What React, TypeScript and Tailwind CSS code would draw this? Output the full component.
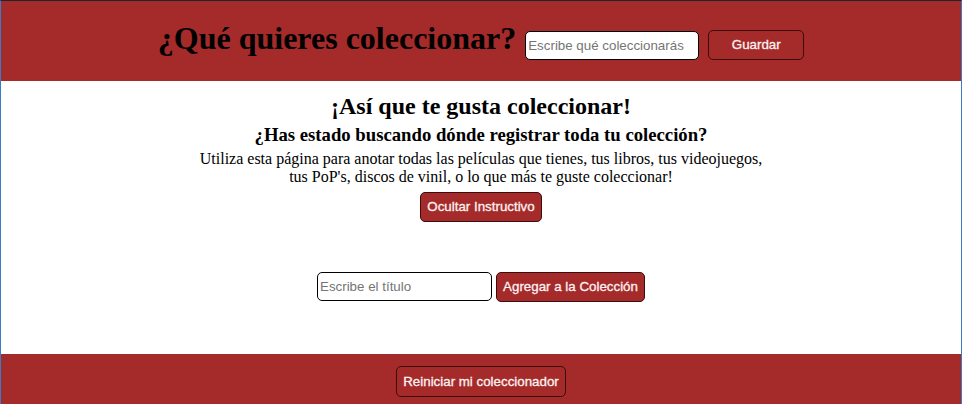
export default function App() {
  return (
    <div className="min-h-[404px] border-x border-t border-x-[#3b7dc4] border-t-[#1b2530] bg-white font-['Liberation_Serif',serif]">
      {/* header with title and collection name */}
      <header className="flex h-[80px] items-center justify-center gap-[9px] bg-[#a52a2a]">
        <h1 className="pb-[6px] text-[32px] leading-[37px] font-bold text-black">¿Qué quieres coleccionar?</h1>
        <input
          type="text"
          placeholder="Escribe qué coleccionarás"
          className="mt-[8px] h-[29px] w-[174px] rounded-[5px] border border-black bg-white px-[2px] font-['Liberation_Sans',sans-serif] text-[13.33px] text-black placeholder:text-[#757575]"
        />
        <button className="mt-[8px] h-[30px] w-[96px] rounded-[5px] border border-[#3d0c0c] bg-[#a52a2a] font-['Liberation_Sans',sans-serif] text-[13.33px] text-[#fdf2f2] [-webkit-text-stroke:0.3px_#fdf2f2]">
          Guardar
        </button>
      </header>

      {/* instructions */}
      <main className="flex h-[273px] flex-col items-center pt-[11px] text-center text-black">
        <h2 className="text-[24px] leading-[28px] font-bold">¡Así que te gusta coleccionar!</h2>
        <h3 className="mt-[4px] text-[18.72px] leading-[22px] font-bold">¿Has estado buscando dónde registrar toda tu colección?</h3>
        <p className="mt-[4px] text-[16px] leading-[18px]">
          Utiliza esta página para anotar todas las películas que tienes, tus libros, tus videojuegos,
          <br />
          tus PoP's, discos de vinil, o lo que más te guste coleccionar!
        </p>
        <button className="mt-[6px] h-[30px] w-[122px] rounded-[5px] border border-[#3d0c0c] bg-[#a52a2a] font-['Liberation_Sans',sans-serif] text-[13.33px] text-[#fdf2f2] [-webkit-text-stroke:0.3px_#fdf2f2]">
          Ocultar Instructivo
        </button>

        {/* add item form */}
        <div className="mt-[50px] flex items-start gap-[4px]">
          <input
            type="text"
            placeholder="Escribe el título"
            className="h-[29px] w-[175px] rounded-[5px] border border-black bg-white px-[2px] font-['Liberation_Sans',sans-serif] text-[13.33px] text-black placeholder:text-[#757575]"
          />
          <button className="h-[30px] w-[149px] rounded-[5px] border border-[#3d0c0c] bg-[#a52a2a] font-['Liberation_Sans',sans-serif] text-[13.33px] text-[#fdf2f2] [-webkit-text-stroke:0.3px_#fdf2f2]">
            Agregar a la Colección
          </button>
        </div>
      </main>

      {/* footer */}
      <footer className="flex h-[50px] justify-center bg-[#a52a2a] pt-[12px]">
        <button className="h-[31px] w-[170px] rounded-[5px] border border-[#3d0c0c] bg-[#a52a2a] font-['Liberation_Sans',sans-serif] text-[13.33px] text-[#fdf2f2] [-webkit-text-stroke:0.3px_#fdf2f2]">
          Reiniciar mi coleccionador
        </button>
      </footer>
    </div>
  );
}
